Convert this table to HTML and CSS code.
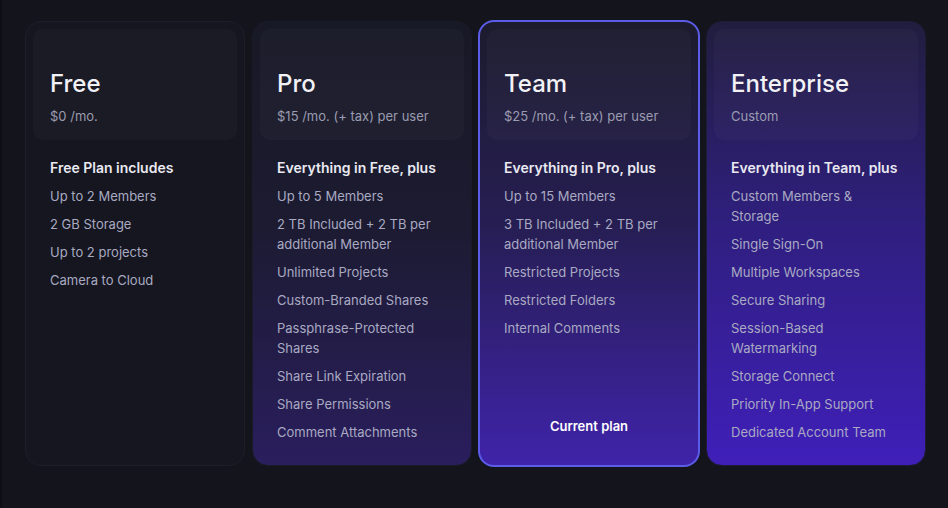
FILE: index.html
```html
<!DOCTYPE html>
<html lang="en">
<head>
  <meta charset="UTF-8">
  <title>Plans</title>
  <link rel="stylesheet" href="styles.css">
</head>
<body>
  <div class="plans">
    <div class="plan plan-free">
      <div class="plan-head">
        <h2>Free</h2>
        <p class="price">$0 /mo.</p>
      </div>
      <ul class="features">
        <li class="lead">Free Plan includes</li>
        <li>Up to 2 Members</li>
        <li>2 GB Storage</li>
        <li>Up to 2 projects</li>
        <li>Camera to Cloud</li>
      </ul>
    </div>

    <div class="plan plan-pro">
      <div class="plan-head">
        <h2>Pro</h2>
        <p class="price">$15 /mo. (+ tax) per user</p>
      </div>
      <ul class="features">
        <li class="lead">Everything in Free, plus</li>
        <li>Up to 5 Members</li>
        <li>2 TB Included + 2 TB per additional Member</li>
        <li>Unlimited Projects</li>
        <li>Custom-Branded Shares</li>
        <li>Passphrase-Protected Shares</li>
        <li>Share Link Expiration</li>
        <li>Share Permissions</li>
        <li>Comment Attachments</li>
      </ul>
    </div>

    <div class="plan plan-team current">
      <div class="plan-head">
        <h2>Team</h2>
        <p class="price">$25 /mo. (+ tax) per user</p>
      </div>
      <ul class="features">
        <li class="lead">Everything in Pro, plus</li>
        <li>Up to 15 Members</li>
        <li>3 TB Included + 2 TB per additional Member</li>
        <li>Restricted Projects</li>
        <li>Restricted Folders</li>
        <li>Internal Comments</li>
      </ul>
      <div class="current-label">Current plan</div>
    </div>

    <div class="plan plan-enterprise">
      <div class="plan-head">
        <h2>Enterprise</h2>
        <p class="price">Custom</p>
      </div>
      <ul class="features">
        <li class="lead">Everything in Team, plus</li>
        <li>Custom Members &amp; Storage</li>
        <li>Single Sign-On</li>
        <li>Multiple Workspaces</li>
        <li>Secure Sharing</li>
        <li>Session-Based Watermarking</li>
        <li>Storage Connect</li>
        <li>Priority In-App Support</li>
        <li>Dedicated Account Team</li>
      </ul>
    </div>
  </div>
</body>
</html>
```

FILE: styles.css
```css
html, body { margin: 0; height: 100%; }
body {
  background: #13141c;
  border-left: 2px solid #0e0f15;
  font-family: Inter, "Noto Sans", sans-serif;
  color: #a9aac2;
  box-sizing: border-box;
}

.plans {
  display: grid;
  grid-template-columns: repeat(4, 220px);
  gap: 7px;
  padding: 21px 0 0 23px;
}

.plan {
  height: 445px;
  box-sizing: border-box;
  border-radius: 16px;
  padding: 7px;
  border: 1px solid transparent;
  display: flex;
  flex-direction: column;
}
.plan-free { background: #15161f; border-color: #1d1e28; }
.plan-pro { background: linear-gradient(180deg, #181926 0%, #1c1b31 45%, #2a1e5d 100%); border-color: #1a1b28; }
.plan-team {
  background: linear-gradient(180deg, #1c1b2d 0%, #261e52 45%, #3f23a9 100%);
  border: 2px solid #5b5ce8;
  margin: -1px;
  height: 447px;
  padding: 7px;
}
.plan-enterprise { background: linear-gradient(180deg, #211d3e 0%, #2f1f7e 45%, #3f1fb9 100%); border-color: #1f1c3a; }

.plan-head {
  background: rgba(255, 255, 255, 0.022);
  border-radius: 10px;
  padding: 39px 17px 14px;
}
.plan-head h2 {
  margin: 0;
  font-size: 24px;
  line-height: 32px;
  font-weight: 500;
  color: #f1f1f6;
}
.price {
  margin: 6px 0 0;
  font-size: 13px;
  line-height: 20px;
  color: #9a9cb0;
}

.features {
  list-style: none;
  margin: 18px 0 0;
  padding: 0 17px;
  display: flex;
  flex-direction: column;
  gap: 8px;
  flex: 1;
}
.features li {
  font-size: 13px;
  line-height: 20px;
}
.features .lead {
  font-size: 14px;
  font-weight: 600;
  color: #e9e9f1;
}

.current-label {
  text-align: center;
  font-size: 13px;
  font-weight: 600;
  line-height: 20px;
  color: #ffffff;
  padding-bottom: 22px;
}
```
